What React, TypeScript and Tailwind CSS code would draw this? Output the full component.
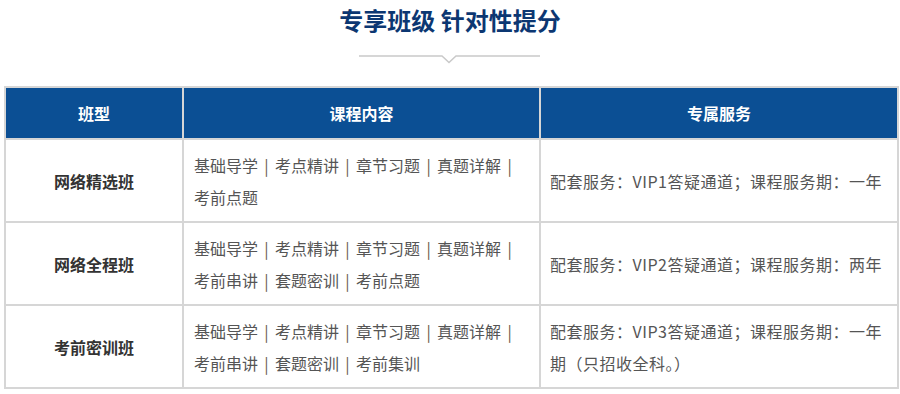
const font = { fontFamily: '"Noto Sans CJK SC", "Microsoft YaHei", sans-serif' };

const rows = [
  {
    name: '网络精选班',
    items: ['基础导学', '考点精讲', '章节习题', '真题详解', '考前点题'],
    service: '配套服务：VIP1答疑通道；课程服务期：一年',
  },
  {
    name: '网络全程班',
    items: ['基础导学', '考点精讲', '章节习题', '真题详解', '考前串讲', '套题密训', '考前点题'],
    service: '配套服务：VIP2答疑通道；课程服务期：两年',
  },
  {
    name: '考前密训班',
    items: ['基础导学', '考点精讲', '章节习题', '真题详解', '考前串讲', '套题密训', '考前集训'],
    service: '配套服务：VIP3答疑通道；课程服务期：一年期（只招收全科。）',
  },
];

function Items({ items }: { items: string[] }) {
  return (
    <>
      {items.map((t, i) => (
        <span key={i} className="inline-block whitespace-nowrap">
          {t}
          {i < items.length - 1 && (
            <span className="inline-block w-[17px] text-center text-[#6b5a4a]">|</span>
          )}
        </span>
      ))}
    </>
  );
}

export default function App() {
  return (
    <div className="w-[900px] h-[394px] bg-white overflow-hidden" style={font}>
      <h2 className="pt-[2px] text-center text-[24px] leading-[36px] font-bold text-[#0c3772]">
        专享班级 针对性提分
      </h2>
      <div className="flex justify-center mt-[17px]">
        <svg width="181" height="9" viewBox="0 0 181 9" className="ml-[-1px]">
          <polyline
            points="0,1 83,1 90,7.5 97,1 181,1"
            fill="none"
            stroke="#c9c9c9"
            strokeWidth="1.5"
          />
        </svg>
      </div>
      <table className="ml-[4px] mt-[22px] w-[893px] table-fixed border-collapse text-[16px]">
        <colgroup>
          <col className="w-[178px]" />
          <col className="w-[357px]" />
          <col className="w-[358px]" />
        </colgroup>
        <thead>
          <tr className="h-[52px] bg-[#0b4f94] text-white font-bold">
            <th className="border-2 border-[#d6d6d6]">班型</th>
            <th className="border-2 border-[#d6d6d6]">课程内容</th>
            <th className="border-2 border-[#d6d6d6]">专属服务</th>
          </tr>
        </thead>
        <tbody>
          {rows.map(r => (
            <tr key={r.name} className="h-[83px]">
              <td className="border-2 border-[#d6d6d6] text-center font-bold text-[#333]">{r.name}</td>
              <td className="border-2 border-[#d6d6d6] pl-[10px] pr-[6px] leading-[32px] text-[#555]">
                <Items items={r.items} />
              </td>
              <td className="border-2 border-[#d6d6d6] pl-[9px] pr-[10px] leading-[32px] tracking-[0.5px] text-[#555]">
                {r.service}
              </td>
            </tr>
          ))}
        </tbody>
      </table>
    </div>
  );
}
